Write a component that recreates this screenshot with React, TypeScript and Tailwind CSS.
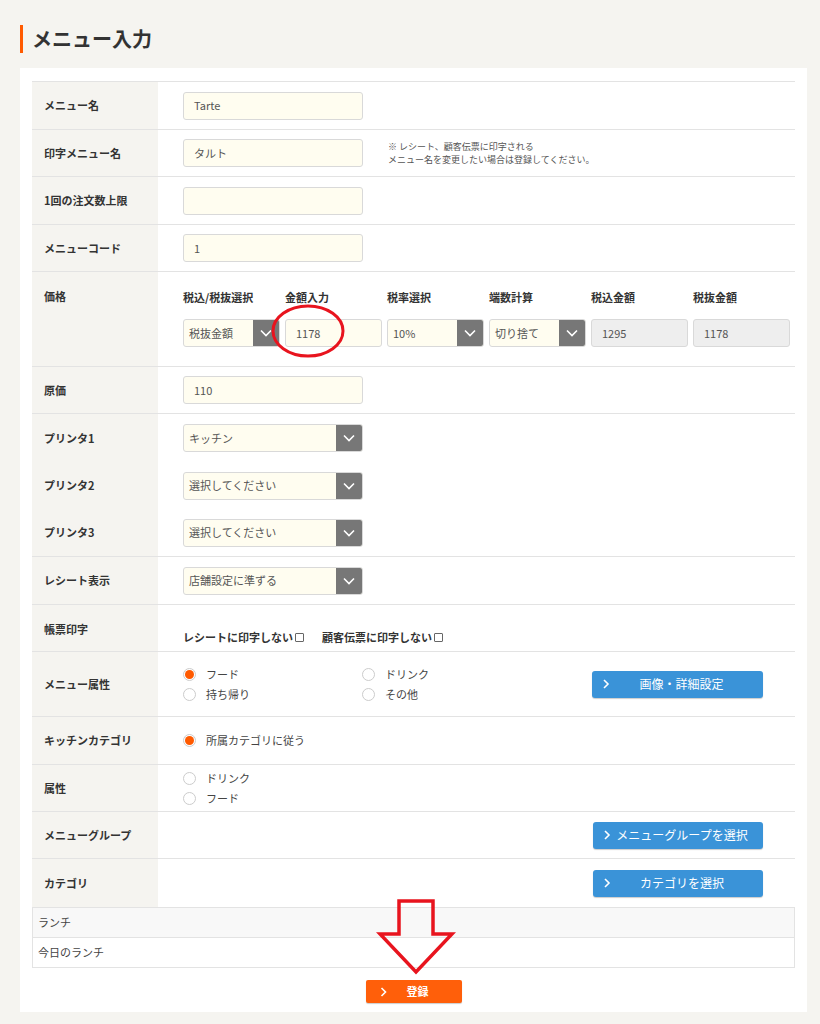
import React from "react";

const F = { fontFamily: '"Noto Sans CJK JP", "Noto Sans", sans-serif' };

const Input = ({ v = "", w = "w-[180px]", gray = false }: { v?: string; w?: string; gray?: boolean }) => (
  <div className={`${w} h-[28px] border border-[#d9d9d9] rounded-[3px] ${gray ? "bg-[#eeeeee]" : "bg-[#fffdf0]"} text-[11px] text-[#555] flex items-center px-[10px]`}>{v}</div>
);

const Chev = () => (
  <svg width="12" height="8" viewBox="0 0 12 8"><path d="M1 1.5 L6 6.5 L11 1.5" stroke="#fff" strokeWidth="1.6" fill="none" /></svg>
);

const Select = ({ v, w = "w-[180px]" }: { v: string; w?: string }) => (
  <div className={`${w} h-[28px] border border-[#d9d9d9] rounded-[3px] bg-[#fffdf0] text-[11px] text-[#555] flex items-center overflow-hidden`}>
    <span className="flex-1 px-[5px]">{v}</span>
    <div className="w-[26px] h-full bg-[#777] flex items-center justify-center"><Chev /></div>
  </div>
);

const Radio = ({ on = false, t }: { on?: boolean; t: string }) => (
  <div className="flex items-center gap-[10px] text-[11px] text-[#444] h-[20px]">
    <span className="w-[13px] h-[13px] rounded-full border border-[#ccc] bg-white flex items-center justify-center">
      {on && <span className="w-[9px] h-[9px] rounded-full bg-[#ff5a00]" />}
    </span>
    {t}
  </div>
);

const Btn = ({ t, w = "w-[170px]" }: { t: string; w?: string }) => (
  <div className={`${w} h-[27px] rounded-[3px] bg-[#3a93d8] text-white text-[12px] flex items-center px-[10px] shadow-[0_1px_1px_rgba(0,0,0,0.2)]`}>
    <svg width="8" height="10" viewBox="0 0 8 10"><path d="M2 1 L6 5 L2 9" stroke="#fff" strokeWidth="1.6" fill="none" /></svg>
    <span className="flex-1 text-center">{t}</span>
  </div>
);

const Row = ({ label, h, children, border = true, top = false }: { label: string; h: number; children?: React.ReactNode; border?: boolean; top?: boolean }) => (
  <div className={`flex ${border ? "border-b border-[#e3e3e3]" : ""}`} style={{ height: h }}>
    <div className={`w-[126px] shrink-0 bg-[#f5f4f0] px-[12px] text-[11px] font-bold text-[#333] flex ${top ? "items-start pt-[16px]" : "items-center"}`}>{label}</div>
    <div className="flex-1 pl-[25px] flex items-center">{children}</div>
  </div>
);

export default function App() {
  const cols: [string, React.ReactNode][] = [
    ["税込/税抜選択", <Select v="税抜金額" w="w-[97px]" />],
    ["金額入力", <Input v="1178" w="w-[97px]" />],
    ["税率選択", <Select v="10%" w="w-[97px]" />],
    ["端数計算", <Select v="切り捨て" w="w-[97px]" />],
    ["税込金額", <Input v="1295" w="w-[97px]" gray />],
    ["税抜金額", <Input v="1178" w="w-[97px]" gray />],
  ];
  return (
    <div className="w-[820px] h-[1024px] bg-[#f5f4f0] relative overflow-hidden" style={F}>
      <div className="pt-[25px] pl-[20px] h-[68px]">
        <div className="flex items-center border-l-[3px] border-[#ff5a00] pl-[9px] h-[28px]">
          <span className="text-[20px] font-bold text-[#333]">メニュー入力</span>
        </div>
      </div>
      <div className="mx-[20px] w-[787px] h-[944px] bg-white pt-[13px] px-[12px]">
        <div className="border-t border-[#e3e3e3]">
          <Row label="メニュー名" h={48}><Input v="Tarte" /></Row>
          <Row label="印字メニュー名" h={47}>
            <Input v="タルト" />
            <div className="ml-[25px] text-[9px] text-[#555] leading-[13px]">※ レシート、顧客伝票に印字される<br />メニュー名を変更したい場合は登録してください。</div>
          </Row>
          <Row label="1回の注文数上限" h={48}><Input /></Row>
          <Row label="メニューコード" h={47}><Input v="1" /></Row>
          <Row label="価格" h={95} top>
            <div className="flex gap-[5px] self-start pt-[17px]">
              {cols.map(([l, c], i) => (
                <div key={i} className="flex flex-col gap-[14px]">
                  <span className="text-[11px] font-bold text-[#333] h-[16px]">{l}</span>
                  {c}
                </div>
              ))}
            </div>
          </Row>
          <Row label="原価" h={47}><Input v="110" /></Row>
          <Row label="プリンタ1" h={48} border={false}><Select v="キッチン" /></Row>
          <Row label="プリンタ2" h={47} border={false}><Select v="選択してください" /></Row>
          <Row label="プリンタ3" h={48}><Select v="選択してください" /></Row>
          <Row label="レシート表示" h={48}><Select v="店舗設定に準ずる" /></Row>
          <Row label="帳票印字" h={47} top>
            <div className="self-start pt-[24px] flex gap-[18px] text-[11px] font-bold text-[#333]">
              <span className="flex items-center gap-[2px]">レシートに印字しない<span className="w-[9px] h-[9px] border border-[#666] rounded-[1px]" /></span>
              <span className="flex items-center gap-[2px]">顧客伝票に印字しない<span className="w-[9px] h-[9px] border border-[#666] rounded-[1px]" /></span>
            </div>
          </Row>
          <Row label="メニュー属性" h={65}>
            <div className="grid grid-cols-[179px_180px] w-[409px]">
              <Radio on t="フード" /><Radio t="ドリンク" />
              <Radio t="持ち帰り" /><Radio t="その他" />
            </div>
            <Btn t="画像・詳細設定" w="w-[171px]" />
          </Row>
          <Row label="キッチンカテゴリ" h={48}><Radio on t="所属カテゴリに従う" /></Row>
          <Row label="属性" h={47}>
            <div className="flex flex-col"><Radio t="ドリンク" /><Radio t="フード" /></div>
          </Row>
          <Row label="メニューグループ" h={47}><div className="flex-1" /><Btn t="メニューグループを選択" /><div className="w-[32px]" /></Row>
          <Row label="カテゴリ" h={48} border={false}><div className="flex-1" /><Btn t="カテゴリを選択" /><div className="w-[32px]" /></Row>
        </div>
        <div className="border border-[#e3e3e3] text-[11px] text-[#444]">
          <div className="h-[30px] bg-[#f8f8f8] border-b border-[#e3e3e3] flex items-center px-[5px]">ランチ</div>
          <div className="h-[29px] flex items-center px-[5px]">今日のランチ</div>
        </div>
        <div className="flex justify-center mt-[12px]">
          <div className="w-[96px] h-[23px] rounded-[2px] bg-[#ff5f0a] text-white text-[11px] font-bold flex items-center px-[14px] gap-[20px] shadow-[0_1px_1px_rgba(0,0,0,0.2)]">
            <svg width="7" height="10" viewBox="0 0 7 10"><path d="M1.5 1 L5.5 5 L1.5 9" stroke="#fff" strokeWidth="1.6" fill="none" /></svg>
            登録
          </div>
        </div>
      </div>
      <svg className="absolute left-[268px] top-[302px]" width="80" height="58" viewBox="0 0 80 58">
        <ellipse cx="40" cy="29" rx="35" ry="25" stroke="#e8141e" strokeWidth="3" fill="none" />
      </svg>
      <svg className="absolute left-[376px] top-[898px]" width="80" height="78" viewBox="0 0 80 78">
        <path d="M23 3 H57 V36 H76 L40 74 L4 36 H23 Z" stroke="#e8141e" strokeWidth="3.5" fill="none" strokeLinejoin="miter" />
      </svg>
    </div>
  );
}
